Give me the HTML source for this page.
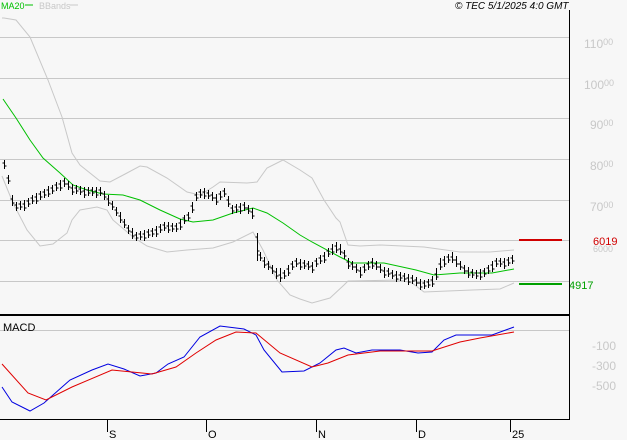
<!DOCTYPE html>
<html><head><meta charset="utf-8"><style>
html,body{margin:0;padding:0;background:#f7f7f7;}
svg{display:block;font-family:"Liberation Sans",sans-serif;}
</style></head><body>
<svg width="627" height="440" viewBox="0 0 627 440" xmlns="http://www.w3.org/2000/svg">
<rect width="627" height="440" fill="#f7f7f7"/>
<g stroke="#c8c8c8" stroke-width="1">
<line x1="0" y1="37.5" x2="569" y2="37.5"/>
<line x1="0" y1="78.5" x2="569" y2="78.5"/>
<line x1="0" y1="118.5" x2="569" y2="118.5"/>
<line x1="0" y1="159.5" x2="569" y2="159.5"/>
<line x1="0" y1="200.5" x2="569" y2="200.5"/>
<line x1="0" y1="240.5" x2="569" y2="240.5"/>
<line x1="0" y1="281.5" x2="569" y2="281.5"/>
<line x1="0" y1="330.5" x2="569" y2="330.5"/>
</g>
<g fill="#c8c8c8" font-size="12">
<text x="584" y="48">110<tspan font-size="9" dy="-3">00</tspan></text>
<text x="584" y="89">100<tspan font-size="9" dy="-3">00</tspan></text>
<text x="590" y="129">90<tspan font-size="9" dy="-3">00</tspan></text>
<text x="590" y="170">80<tspan font-size="9" dy="-3">00</tspan></text>
<text x="590" y="211">70<tspan font-size="9" dy="-3">00</tspan></text>
<text x="593" y="252" font-size="9">6000</text>
<text x="592" y="350">-100</text>
<text x="592" y="370">-300</text>
<text x="592" y="390">-500</text>
</g>
<g fill="none" stroke="#c8c8c8" stroke-width="1">
<polyline points="2,18 4,18 16,20 30,37 48,80 62,117 72,153 80,165 100,181 110,182 127,173 140,166 147,167 167,178 187,192 200,195 213,187 220,182 247,183 257,182 267,168 283,160 300,170 312,178 324,200 336,218 340,222 348,245 360,246 380,245 424,247 460,252 490,252 514,250"/>
<polyline points="2,176 13,203 27,230 40,246 53,244 67,233 72,220 80,210 97,207 107,210 113,220 133,237 147,246 167,252 187,250 213,248 233,242 253,232 263,250 277,280 290,295 300,299 312,303 330,298 344,285 348,281 400,280 412,283 424,292 472,290 500,289 514,283"/>
</g>
<polyline fill="none" stroke="#00c000" stroke-width="1" points="3,99 16,118 30,140 43,158 60,173 73,185 87,190 103,194 123,195 140,200 160,210 180,219 193,222 213,220 233,213 253,208 267,213 283,223 300,235 312,242 340,257 352,263 384,263 416,270 434,275 460,273 492,273 514,269"/>
<path fill="none" stroke="#000" stroke-width="1" d="M4.5 160v9m-2-6h2m0 3h2M8.5 175v9m-2-6h2m0 3h2M12.5 195v11m-2-7h2m0 4h2M16.5 202v9m-2-6h2m0 3h2M20.5 201v9m-2-6h2m0 3h2M24.5 200v11m-2-7h2m0 4h2M28.5 198v9m-2-6h2m0 3h2M32.5 195v9m-2-6h2m0 3h2M36.5 193v11m-2-7h2m0 4h2M40.5 191v9m-2-6h2m0 3h2M44.5 189v9m-2-6h2m0 3h2M48.5 186v11m-2-7h2m0 4h2M52.5 185v9m-2-6h2m0 3h2M56.5 182v9m-2-6h2m0 3h2M60.5 180v11m-2-7h2m0 4h2M64.5 178v9m-2-6h2m0 3h2M68.5 181v9m-2-6h2m0 3h2M72.5 184v11m-2-7h2m0 4h2M76.5 185v9m-2-6h2m0 3h2M80.5 186v9m-2-6h2m0 3h2M84.5 187v11m-2-7h2m0 4h2M88.5 187v9m-2-6h2m0 3h2M92.5 187v9m-2-6h2m0 3h2M96.5 187v11m-2-7h2m0 4h2M100.5 187v9m-2-6h2m0 3h2M104.5 191v9m-2-6h2m0 3h2M108.5 195v11m-2-7h2m0 4h2M112.5 201v9m-2-6h2m0 3h2M116.5 207v9m-2-6h2m0 3h2M120.5 212v11m-2-7h2m0 4h2M124.5 219v9m-2-6h2m0 3h2M128.5 225v9m-2-6h2m0 3h2M132.5 228v11m-2-7h2m0 4h2M136.5 232v9m-2-6h2m0 3h2M140.5 231v9m-2-6h2m0 3h2M144.5 230v11m-2-7h2m0 4h2M148.5 229v9m-2-6h2m0 3h2M152.5 228v9m-2-6h2m0 3h2M156.5 226v11m-2-7h2m0 4h2M160.5 224v9m-2-6h2m0 3h2M164.5 222v9m-2-6h2m0 3h2M168.5 222v11m-2-7h2m0 4h2M172.5 223v9m-2-6h2m0 3h2M176.5 223v9m-2-6h2m0 3h2M180.5 219v11m-2-7h2m0 4h2M184.5 215v9m-2-6h2m0 3h2M188.5 212v9m-2-6h2m0 3h2M192.5 202v11m-2-7h2m0 4h2M196.5 192v9m-2-6h2m0 3h2M200.5 189v9m-2-6h2m0 3h2M204.5 188v11m-2-7h2m0 4h2M208.5 190v9m-2-6h2m0 3h2M212.5 192v9m-2-6h2m0 3h2M216.5 194v11m-2-7h2m0 4h2M220.5 191v9m-2-6h2m0 3h2M224.5 188v9m-2-6h2m0 3h2M228.5 196v11m-2-7h2m0 4h2M232.5 205v9m-2-6h2m0 3h2M236.5 204v9m-2-6h2m0 3h2M240.5 203v11m-2-7h2m0 4h2M244.5 202v9m-2-6h2m0 3h2M248.5 205v9m-2-6h2m0 3h2M252.5 208v11m-2-7h2m0 4h2M257.5 233v28m-2-24h2m0 14h2M260.5 252v9m-2-6h2m0 3h2M264.5 257v11m-2-7h2m0 4h2M268.5 261v9m-2-6h2m0 3h2M272.5 265v9m-2-6h2m0 3h2M276.5 268v11m-2-7h2m0 4h2M280.5 268v14m-2-7h2m0 3h2M284.5 270v9m-2-6h2m0 3h2M288.5 265v11m-2-7h2m0 4h2M292.5 261v9m-2-6h2m0 3h2M296.5 258v9m-2-6h2m0 3h2M300.5 259v11m-2-7h2m0 4h2M304.5 260v9m-2-6h2m0 3h2M308.5 261v9m-2-6h2m0 3h2M312.5 262v11m-2-7h2m0 4h2M316.5 258v9m-2-6h2m0 3h2M320.5 255v9m-2-6h2m0 3h2M324.5 252v11m-2-7h2m0 4h2M328.5 248v9m-2-6h2m0 3h2M332.5 244v11m-2-6h2m0 3h2M336.5 242v11m-2-7h2m0 4h2M340.5 244v11m-2-6h2m0 3h2M344.5 250v9m-2-6h2m0 3h2M348.5 258v11m-2-7h2m0 4h2M352.5 261v9m-2-6h2m0 3h2M356.5 264v9m-2-6h2m0 3h2M360.5 267v11m-2-7h2m0 4h2M364.5 264v9m-2-6h2m0 3h2M368.5 261v9m-2-6h2m0 3h2M372.5 258v11m-2-7h2m0 4h2M376.5 261v9m-2-6h2m0 3h2M380.5 264v9m-2-6h2m0 3h2M384.5 267v11m-2-7h2m0 4h2M388.5 268v9m-2-6h2m0 3h2M392.5 270v9m-2-6h2m0 3h2M396.5 271v11m-2-7h2m0 4h2M400.5 272v9m-2-6h2m0 3h2M404.5 273v9m-2-6h2m0 3h2M408.5 274v11m-2-7h2m0 4h2M412.5 275v9m-2-6h2m0 3h2M416.5 277v9m-2-6h2m0 3h2M420.5 279v11m-2-7h2m0 4h2M424.5 280v9m-2-6h2m0 3h2M428.5 279v9m-2-6h2m0 3h2M432.5 276v11m-2-7h2m0 4h2M436.5 268v12m-2-6h2m0 3h2M440.5 258v12m-2-6h2m0 3h2M444.5 256v11m-2-7h2m0 4h2M448.5 254v9m-2-6h2m0 3h2M452.5 252v11m-2-6h2m0 3h2M456.5 256v11m-2-7h2m0 4h2M460.5 261v9m-2-6h2m0 3h2M464.5 265v9m-2-6h2m0 3h2M468.5 267v11m-2-7h2m0 4h2M472.5 269v9m-2-6h2m0 3h2M476.5 270v9m-2-6h2m0 3h2M480.5 269v11m-2-7h2m0 4h2M484.5 268v9m-2-6h2m0 3h2M488.5 265v9m-2-6h2m0 3h2M492.5 261v11m-2-7h2m0 4h2M496.5 258v9m-2-6h2m0 3h2M500.5 258v9m-2-6h2m0 3h2M504.5 258v11m-2-7h2m0 4h2M508.5 257v9m-2-6h2m0 3h2M512.5 255v9m-2-6h2m0 3h2"/>
<line x1="519" y1="240" x2="562" y2="240" stroke="#d00000" stroke-width="2"/>
<line x1="519" y1="284" x2="562" y2="284" stroke="#00a000" stroke-width="2"/>
<text x="593" y="245" fill="#d00000" font-size="11">6019</text>
<text x="569" y="289" fill="#00a000" font-size="11">4917</text>
<polyline fill="none" stroke="#0000e0" stroke-width="1" points="2,387 12,402 30,411 44,403 70,380 92,370 108,364 124,369 140,376 156,373 168,364 184,357 200,337 220,326 244,329 256,335 264,350 282,372 304,371 320,363 336,350 344,348 356,353 372,350 400,350 418,353 432,352 444,340 456,335 480,335 492,335 514,327"/>
<polyline fill="none" stroke="#e00000" stroke-width="1" points="2,364 28,393 46,400 72,387 112,370 132,372 152,374 176,367 196,353 216,340 236,332 256,333 280,353 312,367 328,363 348,355 380,351 432,351 460,342 480,338 514,332"/>
<line x1="569.5" y1="10" x2="569.5" y2="420" stroke="#000" stroke-width="1"/>
<line x1="0" y1="315" x2="569" y2="315" stroke="#000" stroke-width="2"/>
<line x1="0" y1="419.5" x2="569" y2="419.5" stroke="#000" stroke-width="1"/>
<g stroke="#000"><line x1="107.5" y1="420" x2="107.5" y2="432"/><line x1="206.5" y1="420" x2="206.5" y2="432"/><line x1="316.5" y1="420" x2="316.5" y2="432"/><line x1="416.5" y1="420" x2="416.5" y2="432"/><line x1="510.5" y1="420" x2="510.5" y2="432"/></g>
<g font-size="11" fill="#000">
<text x="109" y="438">S</text><text x="208" y="438">O</text><text x="318" y="438">N</text><text x="418" y="438">D</text><text x="512" y="438">25</text>
<text x="3" y="331">MACD</text>
</g>
<text x="1" y="9" font-size="9" fill="#00c000">MA20</text>
<line x1="25" y1="5" x2="33" y2="5" stroke="#00c000"/>
<text x="39" y="9" font-size="9" fill="#c8c8c8">BBands</text>
<line x1="70" y1="5" x2="78" y2="5" stroke="#c8c8c8"/>
<text x="455" y="9" font-size="10" font-style="italic" fill="#000">© TEC 5/1/2025 4:0 GMT</text>
</svg>
</body></html>
